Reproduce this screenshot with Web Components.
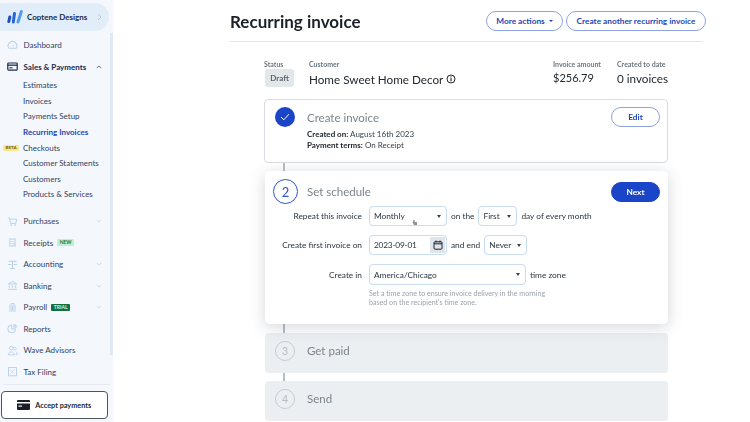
<!DOCTYPE html>
<html lang="en"><head><meta charset="utf-8"><title>Recurring invoice</title>
<style>
html,body{margin:0;padding:0;width:750px;height:422px;overflow:hidden;background:#fff;font-family:Lato,"Open Sans",sans-serif;color:#1c2733}
</style></head><body>
<app-shell>
  <side-nav slot="side">
    <nav-item icon="gauge">Dashboard</nav-item>
    <nav-item icon="card" strong open>Sales &amp; Payments</nav-item>
    <nav-sub>Estimates</nav-sub>
    <nav-sub>Invoices</nav-sub>
    <nav-sub>Payments Setup</nav-sub>
    <nav-sub active>Recurring Invoices</nav-sub>
    <nav-sub badge="BETA">Checkouts</nav-sub>
    <nav-sub>Customer Statements</nav-sub>
    <nav-sub>Customers</nav-sub>
    <nav-sub>Products &amp; Services</nav-sub>
    <nav-item icon="cart" chevron style="margin-top:8px">Purchases</nav-item>
    <nav-item icon="receipt" tag="NEW" tagkind="new">Receipts</nav-item>
    <nav-item icon="scale" chevron>Accounting</nav-item>
    <nav-item icon="bank" chevron>Banking</nav-item>
    <nav-item icon="payroll" chevron tag="TRIAL" tagkind="trial">Payroll</nav-item>
    <nav-item icon="pie">Reports</nav-item>
    <nav-item icon="people">Wave Advisors</nav-item>
    <nav-item icon="tax">Tax Filing</nav-item>
  </side-nav>
  <invoice-page slot="main"></invoice-page>
</app-shell>
<script>
const ICONS={
gauge:'<path d="M2.500 10.500a5.500 5.500 0 1 1 9 0z" fill="none" stroke="currentColor" stroke-width="1.300"/><path d="M7 8l2-2.500" stroke="currentColor" stroke-width="1.100"/>',
card:'<rect x="1" y="2.500" width="12" height="9" rx="1" fill="none" stroke="currentColor" stroke-width="1.500"/><rect x="1" y="4.500" width="12" height="1.600" fill="currentColor"/><rect x="3" y="8" width="4" height="1.400" fill="currentColor"/>',
cart:'<path d="M1 2.500h2.200l1.400 7h6.600l1.300-5.500H3.600" fill="none" stroke="currentColor" stroke-width="1.100"/><circle cx="5.200" cy="11.600" r="1" fill="currentColor"/><circle cx="10.400" cy="11.600" r="1" fill="currentColor"/>',
receipt:'<rect x="2.500" y="1.500" width="9" height="11" fill="currentColor" opacity=".55"/><rect x="4.500" y="4" width="5" height="1" fill="#fff"/><rect x="4.500" y="6.500" width="5" height="1" fill="#fff"/><rect x="4.500" y="9" width="3" height="1" fill="#fff"/>',
scale:'<path d="M2 3h10M7 3v8M4 12h6" fill="none" stroke="currentColor" stroke-width="1.300"/><path d="M1.500 7h4M8.500 7h4" stroke="currentColor" stroke-width="1.300"/>',
bank:'<path d="M7 1.500L1.500 5h11zM3 6.500v4M7 6.500v4M11 6.500v4M1.500 12h11" fill="none" stroke="currentColor" stroke-width="1.100"/>',
payroll:'<rect x="2.500" y="3.500" width="9" height="9" rx="1" fill="currentColor" opacity=".5"/><path d="M5 3.500V2h4v1.500M7 5.500v5" fill="none" stroke="currentColor" stroke-width="1.100"/>',
pie:'<path d="M6 2.500a5 5 0 1 0 5 5H6z" fill="none" stroke="currentColor" stroke-width="1.200"/><path d="M8 1a5 5 0 0 1 5 5H8z" fill="currentColor" opacity=".7"/>',
people:'<circle cx="5.500" cy="4" r="2.300" fill="none" stroke="currentColor" stroke-width="1.100"/><circle cx="10" cy="4.500" r="1.800" fill="none" stroke="currentColor" stroke-width="1"/><path d="M1.500 12.500c0-5 8-5 8 0zM11 8.500c1.500.5 2 2 2 4h-2" fill="none" stroke="currentColor" stroke-width="1.100"/>',
tax:'<rect x="2" y="2" width="10" height="10.500" fill="none" stroke="currentColor" stroke-width="1.100"/><path d="M4.500 10L9.500 4.500" stroke="currentColor" stroke-width="1"/><circle cx="5" cy="5.500" r=".8" fill="currentColor"/><circle cx="9" cy="9" r=".8" fill="currentColor"/>'
};
const chev=(up,c)=>`<svg width="6" height="4" viewBox="0 0 8 5"><path d="${up?'M1 4l3-3 3 3':'M1 1l3 3 3-3'}" fill="none" stroke="${c}" stroke-width="1.200"/></svg>`;
function def(name,css,html){
  customElements.define(name,class extends HTMLElement{
    connectedCallback(){
      if(this.shadowRoot)return;
      const r=this.attachShadow({mode:'open'});
      r.innerHTML=`<style>${css}</style>`+(typeof html==='function'?html(this):html);
    }
  });
}
def('app-shell',`:host{display:grid;grid-template-columns:113px 1fr;width:750px;height:422px;overflow:hidden;filter:blur(.3px)}`,
 `<slot name="side"></slot><slot name="main"></slot>`);

def('side-nav',`:host{display:flex;flex-direction:column;width:113px;height:422px;background:#f4f8fd;box-sizing:border-box;position:relative;overflow:hidden}
.sw{display:flex;align-items:center;height:28px;margin:3px 4px 0 0;background:#e2edfa;border-radius:0 14px 14px 0;padding-left:7px;gap:4px;box-sizing:border-box;flex:none}
.sw b{font-size:8px;font-weight:700;color:#1c2a4a;white-space:nowrap;flex:1}
.sw svg:last-child{margin-right:7px}
.list{display:flex;flex-direction:column;margin-top:3.500px;flex:1;min-height:0}
.track{position:absolute;left:110px;top:33px;width:3px;height:322px;background:#dfe9f6}
.foot{flex:none;display:flex;flex-direction:column}
.rule{height:1px;background:#e6e9ee;margin:0 3px 6px 3px}
.btn{height:28px;margin:0 5.500px 3px 1px;border:1px solid #4b5563;border-radius:4px;background:#fff;display:flex;align-items:center;justify-content:center;gap:5px;font-size:7.300px;font-weight:700;color:#1c2733;box-sizing:border-box}`,
 `<div class="sw"><svg width="16" height="14" viewBox="0 0 16 14"><path d="M2.800 7L1.800 11.500" stroke="#1f4fb8" stroke-width="3" stroke-linecap="round"/><path d="M7.500 3.500L6.300 12" stroke="#2a66d8" stroke-width="3" stroke-linecap="round"/><path d="M14.300 1.600L11 12" stroke="#4f9bf0" stroke-width="3" stroke-linecap="round"/></svg><b>Coptene Designs</b><svg width="5" height="8" viewBox="0 0 5 8"><path d="M1 1l3 3-3 3" fill="none" stroke="#b9c7d8" stroke-width="1"/></svg></div>
 <div class="list"><slot></slot></div><div class="track"></div>
 <div class="foot"><div class="rule"></div><div class="btn"><svg width="13" height="10" viewBox="0 0 13 10"><rect width="13" height="10" rx="1" fill="#1b1f26"/><rect y="2" width="13" height="1.500" fill="#fff"/><rect x="1.500" y="5.500" width="3.500" height="1.200" fill="#fff"/></svg>Accept payments</div></div>`);

def('nav-item',`:host{display:flex;align-items:center;height:21.500px;padding-left:7px;font-size:8px;color:#2f3f63;flex:none;width:106px;box-sizing:border-box;position:relative}
:host([strong]){font-weight:700;color:#1c2a4a}
svg.i{width:11px;height:11px;margin-right:5.500px;color:#b7cdea;flex:none}
:host([strong]) svg.i{color:#1c2a4a}
.t{font-size:5px;font-weight:700;padding:1px 2.500px;border-radius:1px;margin-left:4px;line-height:5px}
.new{background:#bff0cf;color:#16744a}.trial{background:#14703f;color:#d8f3e2}
.c{position:absolute;left:96px;top:9px;display:flex}`,
 h=>{const tag=h.getAttribute('tag'),k=h.getAttribute('tagkind');
 return `<svg class="i" viewBox="0 0 14 14">${ICONS[h.getAttribute('icon')]}</svg><slot></slot>${tag?`<span class="t ${k}">${tag}</span>`:''}${h.hasAttribute('open')?`<span class="c">${chev(true,'#55627a')}</span>`:h.hasAttribute('chevron')?`<span class="c">${chev(false,'#d0d7e0')}</span>`:''}`});

def('nav-sub',`:host{display:flex;align-items:center;height:15.600px;padding-left:23px;font-size:8px;color:#2f3f63;flex:none;position:relative;white-space:nowrap}
:host([active]){color:#1f45b5;font-weight:700}
.b{position:absolute;left:3px;top:5px;width:16px;text-align:center;background:#fbe88a;color:#6b5b10;font-size:4.500px;font-weight:700;line-height:6px;border-radius:1px}`,
 h=>`${h.getAttribute('badge')?`<span class="b">${h.getAttribute('badge')}</span>`:''}<slot></slot>`);

def('pill-button',`:host{display:inline-flex;align-items:center;justify-content:center;height:20px;border:1px solid #8ea2e4;border-radius:10px;background:#fff;color:#1f45b5;font-size:8.300px;font-weight:700;box-sizing:border-box;white-space:nowrap;gap:4px}
:host([primary]){background:#1b45c9;border-color:#1b45c9;color:#fff}`,`<slot></slot>`);

def('step-num',`:host{display:flex;align-items:center;justify-content:center;width:20px;height:20px;border-radius:50%;border:1px solid #c4ccd4;box-sizing:border-box;color:#b3bcc5;font-size:10.500px;background:transparent;flex:none}
:host([on]){width:25px;height:25px;border:1.500px solid #2f55cf;color:#2f55cf;font-size:13px}
:host([done]){background:#1b45c9;border:none;color:#fff}`,`<slot></slot>`);

def('fake-select',`:host{display:flex;align-items:center;justify-content:space-between;height:20px;border:1px solid #c9dcf0;border-radius:4px;background:#fff;box-sizing:border-box;padding:0 5px 0 4px;font-size:8.300px;color:#2a3540;flex:none}
i{display:block;width:0;height:0;border:2.200px solid transparent;border-top:3px solid #39424c;border-bottom:0}`,`<slot></slot><i></i>`);

def('invoice-page',`:host{display:block;height:422px;padding:0 45px 0 117px;box-sizing:border-box;position:relative;overflow:hidden;--txt:#2a3540}
.head{display:flex;align-items:center;height:41px;border-bottom:1.500px solid #e4e7ea;width:473px;box-sizing:content-box;position:relative}
h1{margin:0;font-size:17px;font-weight:700;color:#1c2127;flex:1;padding-top:1px}
.acts{display:flex;gap:3px;position:absolute;left:256px;top:11px}
.more{width:77px}.again{width:140px}
.car{display:block;width:0;height:0;border:2px solid transparent;border-top:2.500px solid #1f45b5;border-bottom:0}
.meta{display:grid;grid-template-columns:45px 244px 64px auto;margin:18px 0 0 34px;width:440px;height:39px}
.lb{font-size:7px;color:#6e7781;font-weight:700;line-height:9px;white-space:nowrap}
.chip{display:flex;width:29px;height:18px;margin-left:1px;background:#e3e7ea;border-radius:3px;align-items:center;justify-content:center;font-size:8px;font-weight:700;color:#5d6670}
.v{font-size:11.700px;color:#22292f;line-height:16px;white-space:nowrap;display:flex;align-items:center;gap:3px;margin-top:1px}
.amt{font-size:11px}
.steps{margin:0 0 0 34px;width:404px;display:flex;flex-direction:column}
.line{width:1.500px;background:#b6bec6;margin-left:19px;flex:none}
.c1{height:64px;border:1px solid #d9dde1;border-radius:4px;box-sizing:border-box;display:flex;padding:7px 7px 0 10px;gap:12px;background:#fff;width:404px}
.c1 .b{flex:1}
.tt{font-size:11.500px;color:#7b848c;line-height:14px;margin-top:4px}
.mini{font-size:8px;line-height:11px;color:#39424c}.mini b{color:#1c2127;font-weight:700}
.c2{height:153px;background:#fff;border-radius:5px;box-shadow:0 3px 16px rgba(40,50,70,.2);box-sizing:border-box;padding:8px 8px 0 8px;margin-left:1px;width:403px;position:relative}
.top{display:flex;align-items:center;height:25px;margin-bottom:2px}
.top span{flex:1;margin-left:9px;font-size:11.500px;color:#7b848c;padding-bottom:1px}
.form{display:flex;flex-direction:column;font-size:8.300px;color:var(--txt)}
.row{display:flex;align-items:center;gap:7px;height:20px;margin-bottom:9px}
.row.last{height:21px;margin-bottom:4px}
.l{width:89px;flex:none;text-align:right;white-space:nowrap}
.ctl{display:flex;align-items:center;gap:4px;white-space:nowrap}
.help{margin-left:96px;font-size:7.100px;line-height:9px;color:#9aa3ab}
.date{display:flex;align-items:center;justify-content:space-between;width:78px;height:20px;border:1px solid #c9dcf0;border-radius:4px;box-sizing:border-box;padding:0 1px 0 4px;flex:none;letter-spacing:-.2px}
.cal{display:flex;align-items:center;justify-content:center;width:15px;height:15.500px;background:#dfe5ea;border-radius:1px}
.c3{height:40px;background:#eceff2;border-radius:4px;display:flex;align-items:center;padding:0 0 5px 10px;gap:12px;font-size:11.500px;color:#7b848c;margin-left:1px;width:403px;box-sizing:border-box;flex:none}
.hand{position:absolute;left:299px;top:219px}`,
`<div class="head"><h1>Recurring invoice</h1><div class="acts"><pill-button class="more">More actions <span class="car"></span></pill-button><pill-button class="again">Create another recurring invoice</pill-button></div></div>
<div class="meta">
 <div><div class="lb">Status</div><div class="chip">Draft</div></div>
 <div><div class="lb">Customer</div><div class="v" style="margin-top:2px">Home Sweet Home Decor <svg width="10" height="10" viewBox="0 0 10 10"><circle cx="5" cy="5" r="4" fill="none" stroke="#22292f" stroke-width="1"/><path d="M5 4.200v3M5 2.500v1" stroke="#22292f" stroke-width="1.200"/></svg></div></div>
 <div><div class="lb">Invoice amount</div><div class="v amt">$256.79</div></div>
 <div><div class="lb">Created to date</div><div class="v">0 invoices</div></div>
</div>
<div class="steps">
 <div class="c1"><step-num done><svg width="10" height="8" viewBox="0 0 10 8"><path d="M1 4l2.800 2.800L9 1.200" fill="none" stroke="#fff" stroke-width="1"/></svg></step-num>
  <div class="b"><div class="tt">Create invoice</div><div class="mini" style="margin-top:4px"><b>Created on:</b> August 16th 2023</div><div class="mini"><b>Payment terms:</b> On Receipt</div></div>
  <pill-button style="width:49px">Edit</pill-button></div>
 <div class="line" style="height:8px"></div>
 <div class="c2"><div class="top"><step-num on>2</step-num><span>Set schedule</span><pill-button primary style="width:49px">Next</pill-button></div>
  <div class="form">
   <div class="row"><div class="l">Repeat this invoice</div><div class="ctl"><fake-select style="width:78px">Monthly</fake-select>on the<fake-select style="width:39px">First</fake-select>day of every month</div></div>
   <div class="row"><div class="l">Create first invoice on</div><div class="ctl"><div class="date">2023-09-01<span class="cal"><svg width="10" height="10" viewBox="0 0 10 10"><rect x="1" y="1.800" width="8" height="7.400" rx="1" fill="none" stroke="#1c2733" stroke-width="1"/><path d="M1 3.800h8M3 .5v2M7 .5v2" stroke="#1c2733" stroke-width="1"/></svg></span></div>and end<fake-select style="width:43px">Never</fake-select></div></div>
   <div class="row last"><div class="l">Create in</div><div class="ctl"><fake-select style="width:157px;height:21px">America/Chicago</fake-select>time zone</div></div>
   <div class="help">Set a time zone to ensure invoice delivery in the morning<br>based on the recipient's time zone.</div>
  </div>
 </div>
 <div class="line" style="height:9px"></div>
 <div class="c3"><step-num>3</step-num>Get paid</div>
 <div class="line" style="height:8px"></div>
 <div class="c3"><step-num>4</step-num>Send</div>
</div>
<svg class="hand" width="6" height="7" viewBox="0 0 6 7"><path d="M1.500 1h1.200v2h2.300v3H2L.6 3.500z" fill="#8d949b"/></svg>`);
</script>
</body></html>
